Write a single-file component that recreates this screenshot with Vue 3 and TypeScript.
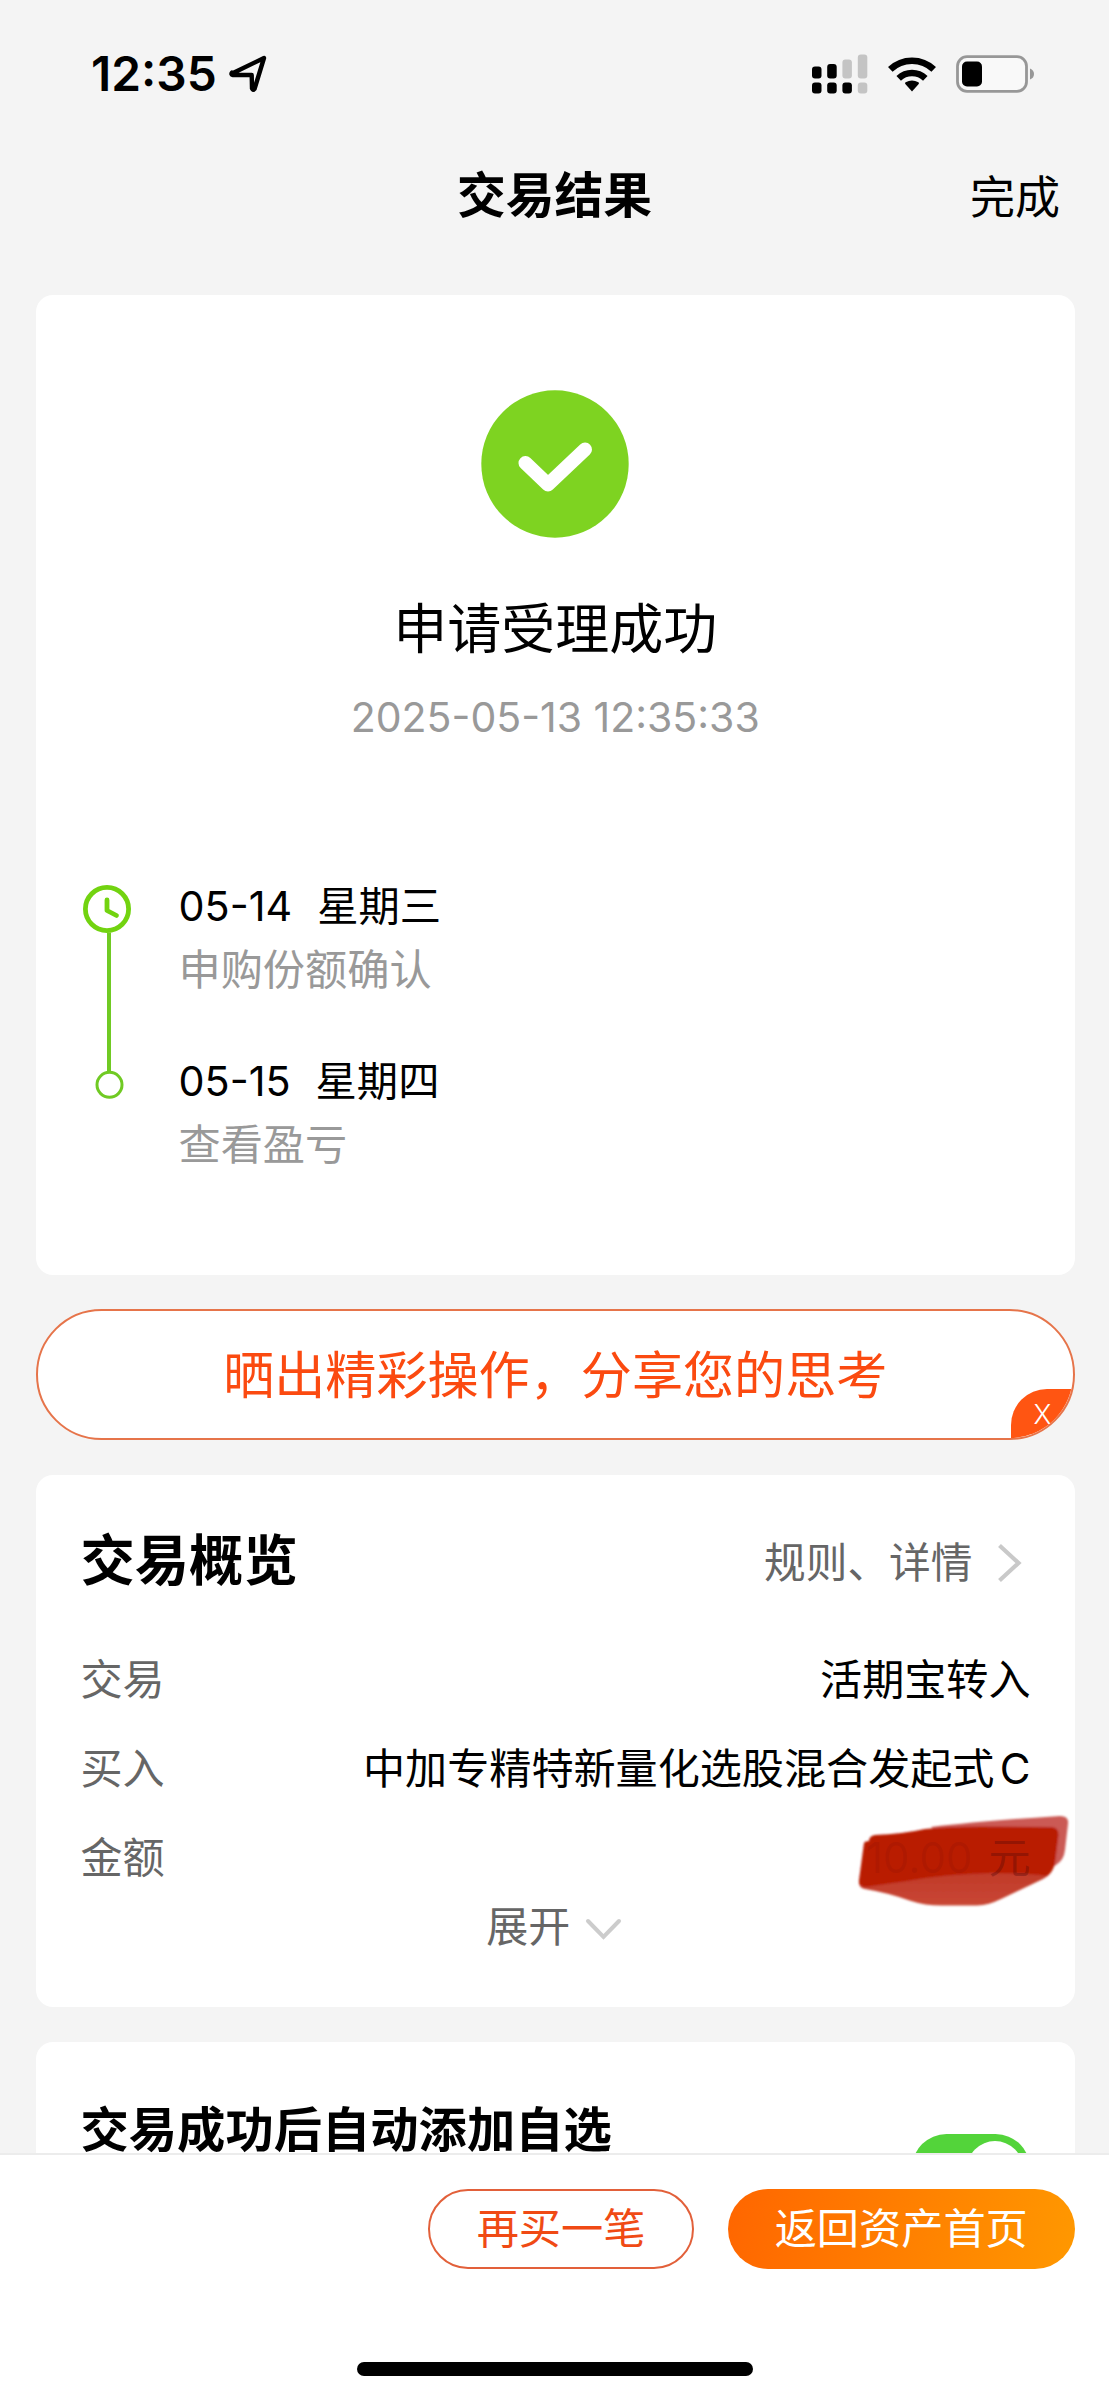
<script setup lang="ts">
interface Step {
  date: string
  weekday: string
  label: string
}

interface Row {
  label: string
  value: string
  unit?: string
  covered?: boolean
}

const steps: Step[] = [
  { date: '05-14', weekday: '星期三', label: '申购份额确认' },
  { date: '05-15', weekday: '星期四', label: '查看盈亏' },
]

const rows: Row[] = [
  { label: '交易', value: '活期宝转入' },
  { label: '买入', value: '中加专精特新量化选股混合发起式 C' },
  { label: '金额', value: '10.00', unit: '元', covered: true },
]
</script>

<template>
  <div class="page" lang="zh-CN">
    <div class="status">
      <span class="time">12:35</span>
      <svg class="location" width="40" height="40" viewBox="0 0 40 40">
        <path d="M4 20 36 4.500 26.500 35.500Q25 37.500 24 35L23.700 21.500H5Q2.500 21 4 19Z" transform="translate(0 -.5)" fill="none" stroke="#000" stroke-width="4.400" stroke-linejoin="round" />
      </svg>
      <div class="indicators">
        <svg width="56" height="40" viewBox="0 0 56 40">
          <g fill="#000">
            <rect x="0" y="12.500" width="9.500" height="12" rx="3" />
            <rect x="15.200" y="10" width="9.500" height="14.500" rx="3" />
            <rect x="0" y="28.500" width="9.500" height="11" rx="3" />
            <rect x="15.200" y="28.500" width="9.500" height="11" rx="3" />
            <rect x="30.400" y="28.500" width="9.500" height="11" rx="3" />
          </g>
          <g fill="#c4c4c4">
            <rect x="30.400" y="5.500" width="9.500" height="19" rx="3" />
            <rect x="45.800" y="0.500" width="9.500" height="24" rx="3" />
            <rect x="45.800" y="28.500" width="9.500" height="11" rx="3" />
          </g>
        </svg>
        <svg class="wifi" width="48" height="36" viewBox="0 0 48 36">
          <g fill="none" stroke="#000" stroke-width="6.600">
            <path d="M2.300 13.400A31.500 31.500 0 0 1 45.700 13.400" />
            <path d="M10.700 22.300A19.500 19.500 0 0 1 37.300 22.300" />
          </g>
          <path d="M24 35.500 17.300 28Q16.500 27 17.600 26.300Q24 22.500 30.400 26.300Q31.500 27 30.700 28Z" />
        </svg>
        <svg width="80" height="38" viewBox="0 0 80 38">
          <rect x="1.500" y="1.700" width="69" height="34.600" rx="9.500" fill="#f9f9f9" stroke="#979797" stroke-width="2.800" />
          <rect x="6" y="6.500" width="20" height="25" rx="5" />
          <path d="M74 13.500Q78 15 78 19T74 24.500Z" fill="#979797" />
        </svg>
      </div>
    </div>

    <header class="nav">
      <span class="side"></span>
      <h1>交易结果</h1>
      <span class="side done">完成</span>
    </header>

    <main class="content">
      <section class="card result">
        <svg class="success" width="148" height="148" viewBox="0 0 148 148">
          <circle cx="74" cy="74" r="73.700" fill="#7ed321" />
          <path d="M44.500 73 67 94.500 104 59.500" fill="none" stroke="#fff" stroke-width="14" stroke-linecap="round" stroke-linejoin="round" />
        </svg>
        <div class="headline">申请受理成功</div>
        <div class="datetime">2025-05-13 12:35:33</div>
        <div class="timeline">
          <svg width="50" height="216" viewBox="0 0 50 216" fill="none">
            <path d="M26 47.500V186" stroke="#70ca23" stroke-width="4" />
            <circle cx="24" cy="24" r="21.600" stroke="#72d310" stroke-width="4.800" />
            <path d="M24 15V25.500L33.500 30.500" stroke="#72d310" stroke-width="4.800" stroke-linecap="round" stroke-linejoin="round" />
            <circle cx="26.500" cy="199.800" r="12.500" stroke="#70ca23" stroke-width="3" />
          </svg>
          <div class="steps">
            <div v-for="s in steps" :key="s.date" class="step">
              <div class="step-date"><span class="md">{{ s.date }}</span><span>{{ s.weekday }}</span></div>
              <div class="step-label">{{ s.label }}</div>
            </div>
          </div>
        </div>
      </section>

      <div class="banner">
        <span>晒出精彩操作，分享您的思考</span>
        <i class="close">X</i>
      </div>

      <section class="card overview">
        <div class="head">
          <h2>交易概览</h2>
          <a class="more">规则、详情
            <svg width="26" height="42" viewBox="0 0 26 42"><path d="M2.500 3.500 21.500 21 2.500 38.500" fill="none" stroke="#c9c9c9" stroke-width="4.200" /></svg>
          </a>
        </div>
        <div v-for="r in rows" :key="r.label" class="row">
          <span class="label">{{ r.label }}</span>
          <svg v-if="r.covered" class="scribble" width="250" height="120" viewBox="0 0 250 120">
            <defs>
              <filter id="soft" x="-5%" y="-5%" width="110%" height="110%"><feGaussianBlur stdDeviation="1.200" /></filter>
              <linearGradient id="lower" x1="0" y1="0" x2="0" y2="1">
                <stop offset="0" stop-color="#bd3524" />
                <stop offset="1" stop-color="#c94735" />
              </linearGradient>
            </defs>
            <g filter="url(#soft)">
              <path d="M90 27Q140 21 219 16Q228 16 227 24L224 50Q223 60 215 65L205 70 120 60Z" fill="#cb5a54" />
              <path d="M18 82Q18 88 24 89Q48 93 70 101Q84 105.500 100 105.500H136Q148 105 160 99L202 79Q212 74 213 64L150 60Z" fill="url(#lower)" />
              <path d="M23 43Q24 41 28 41Q28 36 34 35Q62 34 84 29Q106 26.500 140 26.500L209 27Q218 27 217.500 35L214 63Q213 70 206 76Q190 73 150 73Q104 74 66 81L28 86.500Q17 88 18 80Z" fill="#b91a02" />
            </g>
          </svg>
          <span class="value" :class="{ covered: r.covered }">{{ r.value }}<span v-if="r.unit" class="unit">{{ r.unit }}</span></span>
        </div>
        <div class="expand">展开
          <svg width="37" height="24" viewBox="0 0 37 24"><path d="M3 3 18.500 19 34 3" fill="none" stroke="#ccc" stroke-width="4" stroke-linecap="round" /></svg>
        </div>
      </section>

      <section class="card auto">
        <h3>交易成功后自动添加自选</h3>
        <span class="toggle"></span>
      </section>
    </main>

    <footer class="footer">
      <div class="actions">
        <button class="again">再买一笔</button>
        <button class="home">返回资产首页</button>
      </div>
      <div class="indicator"></div>
    </footer>
  </div>
</template>

<style>
body {
  margin: 0;
}
</style>

<style scoped>
.page {
  width: 1109px;
  height: 2400px;
  display: flex;
  flex-direction: column;
  overflow: hidden;
  background: #f4f4f4;
  color: #000;
  font-family: Inter, "Noto Sans CJK SC", sans-serif;
  box-sizing: border-box;
}
.page * {
  box-sizing: border-box;
}
svg {
  display: block;
  flex: none;
}
h1, h2, h3 {
  margin: 0;
}
.status {
  flex: none;
  height: 148px;
  padding: 0 73px 0 91px;
  display: flex;
  align-items: center;
}
.time {
  font-size: 47.800px;
  font-weight: 600;
  line-height: 60px;
  width: 137px;
}
.indicators {
  margin-left: auto;
  display: flex;
  align-items: center;
}
.wifi {
  margin: 0 20px;
}
.nav {
  flex: none;
  height: 92px;
  padding: 3px 49px 0;
  display: flex;
  align-items: center;
  justify-content: space-between;
  margin-bottom: 55px;
}
.nav h1 {
  font-size: 48.800px;
  font-weight: 700;
  line-height: 60px;
}
.side {
  width: 160px;
}
.done {
  font-size: 45px;
  line-height: 60px;
  text-align: right;
  padding-top: 5px;
}
.content {
  flex: 1;
  min-height: 0;
  overflow: hidden;
  padding: 0 34.500px 0 36px;
  display: flex;
  flex-direction: column;
  gap: 34.500px;
}
.card {
  flex: none;
  background: #fff;
  border-radius: 17px;
}
.result {
  height: 979.500px;
  padding-top: 95px;
  display: flex;
  flex-direction: column;
  align-items: center;
}
.headline {
  margin-top: 62px;
  font-size: 54px;
  line-height: 60px;
}
.datetime {
  margin-top: 32px;
  font-size: 41px;
  line-height: 50px;
  color: #999;
}
.timeline {
  align-self: stretch;
  margin-top: 139px;
  padding-left: 47px;
  display: flex;
}
.timeline svg {
  margin-top: 3.500px;
}
.steps {
  margin-left: 45.500px;
  display: flex;
  flex-direction: column;
  gap: 61px;
}
.step-date {
  display: flex;
  gap: 25px;
  font-size: 41.300px;
  line-height: 50px;
}
.step-label {
  margin-top: 14px;
  font-size: 42.200px;
  line-height: 50px;
  color: #999;
}
.banner {
  flex: none;
  height: 131px;
  position: relative;
  display: flex;
  align-items: center;
  justify-content: center;
  overflow: hidden;
  border: 2px solid #e6744a;
  border-radius: 66px;
  background: #fff;
  color: #fb4a10;
  font-size: 51.100px;
  line-height: 60px;
}
.close {
  position: absolute;
  right: -2px;
  bottom: -2px;
  width: 64px;
  height: 51px;
  padding: 0 0 2px 23px;
  border-top-left-radius: 36px;
  background: #ff5512;
  color: #fff;
  font-size: 27px;
  font-style: normal;
  font-weight: 300;
  line-height: 52px;
}
.overview {
  height: 532.500px;
  padding: 55px 44px 0 44.500px;
}
.head {
  height: 60px;
  margin-bottom: 46px;
  display: flex;
  align-items: center;
  justify-content: space-between;
}
.head h2 {
  font-size: 54.300px;
  font-weight: 700;
  line-height: 60px;
}
.more {
  display: flex;
  align-items: center;
  gap: 24px;
  margin-right: 8px;
  padding-top: 6px;
  font-size: 41.700px;
  line-height: 50px;
  color: #666;
}
.row {
  position: relative;
  height: 89px;
  display: flex;
  align-items: center;
  justify-content: space-between;
  font-size: 42.100px;
  line-height: 50px;
}
.label {
  color: #666;
}
.value {
  position: relative;
  word-spacing: -6.500px;
}
.covered {
  color: rgba(110, 10, 10, 0.13);
}
.unit {
  margin-left: 16px;
  color: rgba(90, 10, 10, 0.4);
}
.scribble {
  position: absolute;
  right: -60px;
  top: -14px;
}
.expand {
  display: flex;
  align-items: center;
  justify-content: center;
  gap: 14.500px;
  height: 48px;
  padding-right: 3px;
  font-size: 42px;
  line-height: 48px;
  color: #666;
}
.expand svg {
  margin-top: 6px;
}
.auto {
  height: 250px;
  padding: 0 45px 0 44.500px;
  display: flex;
  align-items: flex-start;
  justify-content: space-between;
}
.auto h3 {
  margin-top: 65px;
  font-size: 48.300px;
  font-weight: 700;
  line-height: 46px;
}
.toggle {
  width: 118px;
  height: 69px;
  margin-top: 92.500px;
  padding: 6.500px;
  border-radius: 35px;
  background: #53d43a;
}
.toggle::after {
  content: "";
  display: block;
  width: 56px;
  height: 56px;
  margin-left: auto;
  border-radius: 50%;
  background: #fff;
}
.footer {
  flex: none;
  height: 247px;
  border-top: 2px solid #ececec;
  background: #fff;
  padding: 34px 34.500px 0;
}
.actions {
  display: flex;
  justify-content: flex-end;
  gap: 34px;
}
button {
  height: 80px;
  padding: 0;
  border: 0;
  border-radius: 40px;
  font-family: inherit;
  font-size: 42.200px;
  line-height: 50px;
}
.again {
  width: 266px;
  border: 2px solid #e2603a;
  background: #fff;
  color: #f04a14;
}
.home {
  width: 346.500px;
  background: linear-gradient(100deg, #ff6600, #ff9800);
  color: #fff;
}
.indicator {
  width: 396px;
  height: 14px;
  margin: 93px auto 0;
  border-radius: 7px;
  background: #000;
}
</style>
